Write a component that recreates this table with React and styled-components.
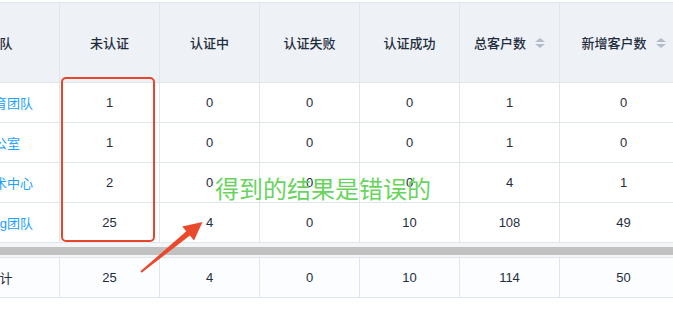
import { Fragment, useLayoutEffect, useRef } from "react";
import styled, { createGlobalStyle } from "styled-components";

const GlobalStyle = createGlobalStyle`
  html, body {
    margin: 0;
    padding: 0;
    background: #fff;
  }
  body {
    font-family: "Liberation Sans", "Noto Sans CJK SC", sans-serif;
    color: #1f2d3d;
  }
`;

const Page = styled.div`
  position: relative;
  width: 673px;
  height: 319px;
  overflow: hidden;
  background: #fff;
  padding-top: 2px;
  box-sizing: border-box;
`;

/* table is scrolled sideways, first column partly hidden */
const ScrollBox = styled.div`
  width: 100%;
  overflow: hidden;
`;

const Table = styled.div`
  display: grid;
  grid-template-columns: 120px repeat(5, 100px) 128px;
  width: 748px;
  border-top: 1px solid #dfe6ec;
`;

const Cell = styled.div`
  box-sizing: border-box;
  display: flex;
  align-items: center;
  justify-content: ${(p) => (p.$left ? "flex-start" : "center")};
  padding-left: ${(p) => (p.$left ? "41px" : "0")};
  height: ${(p) => p.$height || 40}px;
  border-right: 1px solid #dfe6ec;
  border-bottom: 1px solid #dfe6ec;
  background: ${(p) => p.$bg || "#fff"};
  font-size: 13px;
  white-space: nowrap;
  overflow: hidden;
`;

const HeadCell = styled(Cell)`
  font-weight: 500;
  color: #1f2d3d;
  gap: 9px;
`;

const TeamLink = styled.a`
  color: #20a0ff;
  text-decoration: none;
  cursor: pointer;
`;

const SortIcon = styled.span`
  display: inline-flex;
  flex-direction: column;
  gap: 2px;

  &::before,
  &::after {
    content: "";
    width: 0;
    height: 0;
    border-left: 5px solid transparent;
    border-right: 5px solid transparent;
  }
  &::before {
    border-bottom: 4px solid #b4bccc;
  }
  &::after {
    border-top: 4px solid #b4bccc;
  }
`;

const ScrollTrack = styled.div`
  background: #f4f5f7;
  padding: 4px 0 2px;
`;

const ScrollThumb = styled.div`
  height: 8px;
  background: #c1c1c1;
`;

const MarkBox = styled.div`
  position: absolute;
  left: 61px;
  top: 77px;
  width: 94px;
  height: 165px;
  box-sizing: border-box;
  border: 2.5px solid #e9452d;
  border-radius: 5px;
`;

const Note = styled.div`
  position: absolute;
  left: 215px;
  top: 176px;
  font-family: "Noto Sans CJK SC", sans-serif;
  font-size: 24px;
  line-height: 24px;
  color: #68d45e;
  white-space: nowrap;
`;

const ArrowSvg = styled.svg`
  position: absolute;
  left: 0;
  top: 0;
`;

const columns = [
  { title: "团队" },
  { title: "未认证" },
  { title: "认证中" },
  { title: "认证失败" },
  { title: "认证成功" },
  { title: "总客户数", sortable: true },
  { title: "新增客户数", sortable: true },
];

const rows = [
  { team: "教育团队", values: [1, 0, 0, 0, 1, 0] },
  { team: "办公室", values: [1, 0, 0, 0, 1, 0] },
  { team: "技术中心", values: [2, 0, 0, 0, 4, 1] },
  { team: "Ping团队", values: [25, 4, 0, 10, 108, 49] },
];

const totals = [25, 4, 0, 10, 114, 50];

function Arrow() {
  // tapered annotation arrow, tail bottom-left, tip up-right
  return (
    <ArrowSvg width="673" height="319" viewBox="0 0 673 319">
      <polygon
        points="141.6,272.8 189.9,235.5 194,240.5 202.5,222 182.2,226.6 186.3,231.3 140.4,271.2"
        fill="#ea4a2c"
        strokeLinejoin="round"
      />
    </ArrowSvg>
  );
}

export default function App() {
  const bodyRef = useRef(null);
  const footRef = useRef(null);

  useLayoutEffect(() => {
    if (bodyRef.current) bodyRef.current.scrollLeft = 60;
    if (footRef.current) footRef.current.scrollLeft = 60;
  }, []);

  return (
    <>
      <GlobalStyle />
      <Page>
        <ScrollBox ref={bodyRef}>
          <Table>
            {columns.map((col) => (
              <HeadCell key={col.title} $height={80} $bg="#eef1f6">
                {col.title}
                {col.sortable && <SortIcon />}
              </HeadCell>
            ))}
            {rows.map((row) => (
              <Fragment key={row.team}>
                <Cell $left>
                  <TeamLink>{row.team}</TeamLink>
                </Cell>
                {row.values.map((v, i) => (
                  <Cell key={i}>{v}</Cell>
                ))}
              </Fragment>
            ))}
          </Table>
        </ScrollBox>
        <ScrollTrack>
          <ScrollThumb />
        </ScrollTrack>
        <ScrollBox ref={footRef}>
          <Table>
            <Cell $bg="#fbfdff">合计</Cell>
            {totals.map((v, i) => (
              <Cell key={i} $bg="#fbfdff">
                {v}
              </Cell>
            ))}
          </Table>
        </ScrollBox>
        <MarkBox />
        <Note>得到的结果是错误的</Note>
        <Arrow />
      </Page>
    </>
  );
}
